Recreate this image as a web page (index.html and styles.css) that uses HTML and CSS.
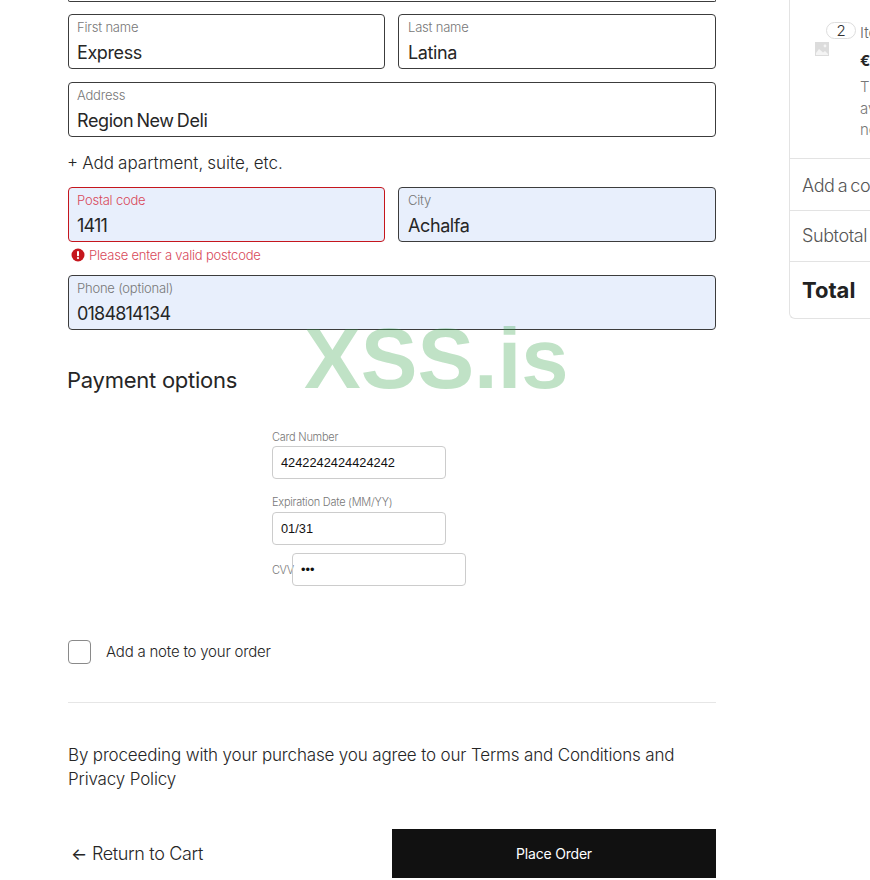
FILE: index.html
```html
<!DOCTYPE html>
<html lang="en">
<head>
    <meta charset="UTF-8">
    <meta name="viewport" content="width=device-width, initial-scale=1.0">
    <title>Checkout</title>
    <link rel="stylesheet" href="styles.css">
</head>
<body>
    <div class="watermark">XSS.is</div>

    <div class="checkout">
        <main class="checkout-form">
            <div class="field-cut"></div>

            <div class="field-row">
                <div class="field">
                    <span class="field-label">First name</span>
                    <span class="field-value">Express</span>
                </div>
                <div class="field">
                    <span class="field-label">Last name</span>
                    <span class="field-value">Latina</span>
                </div>
            </div>

            <div class="field">
                <span class="field-label">Address</span>
                <span class="field-value">Region New Deli</span>
            </div>

            <a class="add-line">+ Add apartment, suite, etc.</a>

            <div class="field-row">
                <div class="field field-filled field-error">
                    <span class="field-label">Postal code</span>
                    <span class="field-value field-digits">1411</span>
                </div>
                <div class="field field-filled">
                    <span class="field-label">City</span>
                    <span class="field-value">Achalfa</span>
                </div>
            </div>

            <div class="error-line">
                <svg class="error-icon" viewBox="0 0 14 14" width="14" height="14">
                    <circle cx="7" cy="7" r="6.5" fill="#c5161d"/>
                    <rect x="6" y="3" width="2" height="5.2" rx="0.8" fill="#fff"/>
                    <circle cx="7" cy="10.1" r="1.1" fill="#fff"/>
                </svg>
                <span>Please enter a valid postcode</span>
            </div>

            <div class="field field-filled">
                <span class="field-label">Phone (optional)</span>
                <span class="field-value field-digits">0184814134</span>
            </div>

            <h2 class="section-title">Payment options</h2>

            <div class="card-frame">
                <label class="card-label">Card Number</label>
                <div class="card-input">4242242424424242</div>
                <label class="card-label card-label-exp">Expiration Date (MM/YY)</label>
                <div class="card-input">01/31</div>
                <div class="card-cvv">
                    <label class="card-label card-label-cvv">CVV</label>
                    <div class="card-input card-input-cvv">•••</div>
                </div>
            </div>

            <div class="note-row">
                <span class="note-box"></span>
                <span class="note-text">Add a note to your order</span>
            </div>

            <p class="terms">By proceeding with your purchase you agree to our Terms and Conditions and Privacy Policy</p>

            <div class="actions">
                <a class="back-link"><span class="back-arrow">←</span>Return to Cart</a>
                <button class="place-order">Place Order</button>
            </div>
        </main>

        <aside class="summary">
            <div class="summary-item">
                <svg class="item-thumb" viewBox="0 0 14 14" width="14" height="14">
                    <rect width="14" height="14" fill="#dcdcdc"/>
                    <path d="M1 11 L4 7 L8 10.5 L10 9 L13 12 L13 13 L1 13 Z" fill="#f4f4f4"/>
                    <circle cx="10" cy="4" r="1.4" fill="#f4f4f4"/>
                </svg>
                <div class="item-info">
                    <div class="item-title"><span class="item-qty">2</span><span class="item-name">Item</span></div>
                    <div class="item-price">€29</div>
                    <p class="item-desc">The item<br>available<br>now</p>
                </div>
            </div>
            <div class="summary-row">Add a coupon</div>
            <div class="summary-row">Subtotal</div>
            <div class="summary-row summary-total">Total</div>
        </aside>
    </div>
</body>
</html>
```

FILE: styles.css
```css
* {
    margin: 0;
    padding: 0;
    box-sizing: border-box;
}

html, body {
    height: 880px;
    overflow: hidden;
}

body {
    background: #fff;
    color: #262626;
    font-family: 'Inter', 'Noto Sans', sans-serif;
    font-weight: 300;
    position: relative;
}

.watermark {
    position: absolute;
    left: 304px;
    top: 310px;
    font-family: 'Liberation Sans', sans-serif;
    font-weight: bold;
    font-size: 85px;
    line-height: 98px;
    color: rgba(46, 160, 67, 0.3);
    z-index: 5;
}

.checkout {
    display: flex;
    width: 870px;
    padding-left: 68px;
    gap: 73px;
}

.checkout-form {
    width: 648px;
    flex: none;
    display: flex;
    flex-direction: column;
}

.field-cut {
    height: 2px;
    border: 1px solid #3c3c3c;
    border-top: 0;
    border-radius: 0 0 4px 4px;
    margin-bottom: 12px;
}

.field-row {
    display: grid;
    grid-template-columns: 317px 1fr;
    gap: 13px;
}

.field {
    height: 55px;
    border: 1px solid #3c3c3c;
    border-radius: 4px;
    padding: 4px 8px 0;
    display: flex;
    flex-direction: column;
    background: #fff;
}

.field-row .field:last-child {
    padding-left: 9px;
}

.field-row + .field {
    margin-top: 13px;
}

.field-label {
    font-size: 13px;
    line-height: 16px;
    color: #777;
    letter-spacing: -0.2px;
}

.field-value {
    font-size: 18px;
    font-weight: 400;
    line-height: 24px;
    margin-top: 6px;
    letter-spacing: -0.4px;
    word-spacing: -1.5px;
}

.field-digits {
    letter-spacing: -0.8px;
}

.field-filled {
    background: #e8effc;
}

.field-error {
    border-color: #c5161d;
}

.field-error .field-label {
    color: #d8495a;
}

.add-line {
    font-size: 17px;
    line-height: 24px;
    margin: 14px 0 12px -1px;
    word-spacing: -0.7px;
}

.error-line {
    display: flex;
    align-items: center;
    gap: 4px;
    height: 20px;
    margin-top: 3px;
    padding-left: 3px;
    font-size: 13px;
    color: #d8495a;
    letter-spacing: -0.21px;
}

.error-line + .field {
    margin-top: 10px;
}

.section-title {
    font-size: 22px;
    line-height: 30px;
    font-weight: 400;
    margin: 35px 0 0 -1px;
    letter-spacing: -0.25px;
}

.card-frame {
    margin: 35px 0 0 204px;
    width: 200px;
    height: 190px;
}

.card-label {
    display: block;
    font-size: 11px;
    line-height: 14px;
    color: #777;
    letter-spacing: -0.25px;
}

.card-label-exp {
    margin-top: 16px;
    margin-bottom: 3px;
}

.card-input {
    width: 174px;
    height: 33px;
    margin-top: 2px;
    border: 1px solid #ccc;
    border-radius: 4px;
    padding-left: 8px;
    font-family: 'Liberation Sans', sans-serif;
    font-weight: 400;
    font-size: 12.8px;
    line-height: 31px;
    color: #111;
}

.card-cvv {
    display: flex;
    align-items: center;
    margin-top: 8px;
}

.card-label-cvv {
    width: 20px;
    flex: none;
    white-space: nowrap;
    letter-spacing: -0.4px;
}

.card-input-cvv {
    margin-top: 0;
    flex: none;
}

.note-row {
    display: flex;
    align-items: center;
    gap: 15px;
    font-size: 15px;
    letter-spacing: -0.21px;
    padding-bottom: 38px;
    margin-top: 20px;
    border-bottom: 1px solid #e6e6e6;
}

.note-text {
    margin-top: -2px;
}

.note-box {
    width: 23px;
    height: 24px;
    border: 1px solid #8a8a8a;
    border-radius: 4px;
}

.terms {
    font-size: 17px;
    line-height: 24px;
    margin-top: 40px;
    letter-spacing: -0.155px;
}

.actions {
    display: flex;
    align-items: center;
    justify-content: space-between;
    margin-top: 38px;
}

.back-link {
    font-size: 18px;
    letter-spacing: -0.35px;
    padding-left: 3px;
}

.back-arrow {
    font-size: 17px;
    font-weight: 400;
    margin-right: 5px;
}

.place-order {
    width: 324px;
    height: 49px;
    background: #111;
    color: #fff;
    border: 0;
    font-family: inherit;
    font-weight: 400;
    font-size: 14px;
    letter-spacing: -0.2px;
}

.summary {
    flex: 1;
    min-width: 0;
    height: 319px;
    border: 1px solid #e3e3e3;
    border-top: 0;
    border-right: 0;
    border-radius: 0 0 0 6px;
    overflow: hidden;
}

.summary-item {
    height: 159px;
    display: flex;
    padding: 19px 0 0 25px;
    border-bottom: 1px solid #e3e3e3;
}

.item-thumb {
    margin-top: 23px;
    flex: none;
}

.item-info {
    margin-left: 31px;
    font-size: 15px;
}

.item-title {
    display: flex;
    align-items: flex-start;
    margin-left: -34px;
    line-height: 22px;
    gap: 4px;
    color: #666;
}

.item-name {
    margin-top: 3px;
}

.item-qty {
    width: 30px;
    height: 17px;
    margin-top: 3px;
    border: 1px solid #ddd;
    border-radius: 9px;
    text-align: center;
    line-height: 15px;
    color: #333;
}

.item-price {
    font-weight: 700;
    margin-top: 5px;
    line-height: 24px;
}

.item-desc {
    margin-top: 3px;
    line-height: 21.5px;
    color: #777;
}

.summary-row {
    padding-left: 12px;
    height: 52px;
    font-size: 18px;
    line-height: 53px;
    color: #555;
    border-bottom: 1px solid #e3e3e3;
    letter-spacing: -0.4px;
    word-spacing: -1.5px;
    white-space: nowrap;
}

.summary-row:nth-child(3) {
    height: 51px;
    line-height: 50px;
}

.summary-total {
    border-bottom: 0;
    height: 57px;
    line-height: 57px;
    font-size: 22px;
    font-weight: 700;
    color: #222;
    letter-spacing: 0;
}
```
